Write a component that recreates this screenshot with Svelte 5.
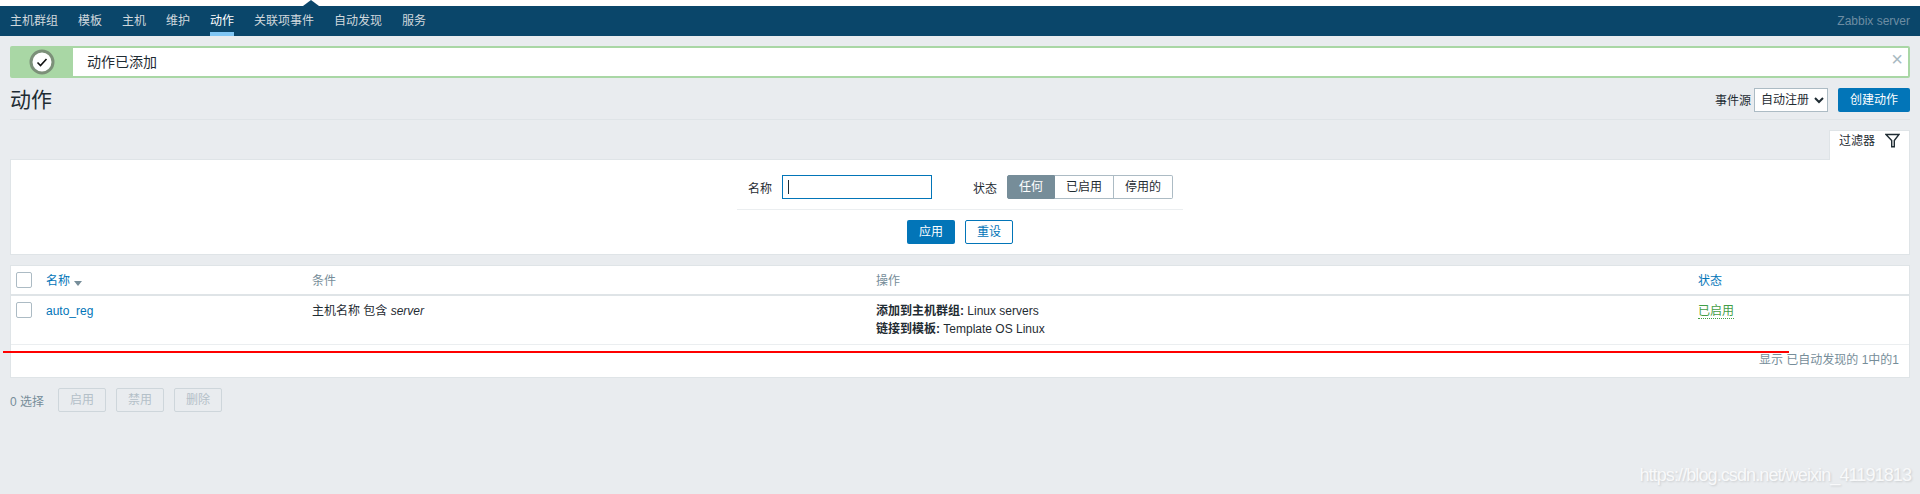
<script>
	const navItems = ['主机群组', '模板', '主机', '维护', '动作', '关联项事件', '自动发现', '服务'];
	const statuses = ['任何', '已启用', '停用的'];
	const bulk = ['启用', '禁用', '删除'];
</script>

<div class="page">
	<div class="topline"><span class="notch"></span></div>
	<nav class="nav">
		<ul>
			{#each navItems as item}
				<li class:active={item === '动作'}>{item}</li>
			{/each}
		</ul>
		<span class="server">Zabbix server</span>
	</nav>

	<main class="content">
		<div class="notice">
			<div class="notice-icon">
				<svg width="26" height="26" viewBox="0 0 26 26">
					<circle cx="13" cy="13" r="11" fill="#fff" stroke="#7c9079" stroke-width="3" />
					<path d="M8.5 13.5l3 3 6-6.5" fill="none" stroke="#111" stroke-width="1.6" />
				</svg>
			</div>
			<div class="notice-text">动作已添加</div>
			<span class="notice-close">×</span>
		</div>

		<header class="head">
			<h1>动作</h1>
			<div class="head-controls">
				<label class="source">
					事件源
					<select><option>自动注册</option></select>
				</label>
				<button class="btn primary create">创建动作</button>
			</div>
		</header>

		<div class="filter-tab-row">
			<div class="filter-tab">
				过滤器
				<svg width="15" height="15" viewBox="0 0 15 15">
					<path d="M1 1.5h13L9.3 7.5v6.2H6.7V7.5z" fill="none" stroke="#1f2c33" stroke-width="1.4" />
				</svg>
			</div>
		</div>
		<section class="filter">
			<div class="filter-fields">
				<span class="flabel">名称</span>
				<div class="name-input"><span class="caret"></span></div>
				<span class="flabel status-label">状态</span>
				<div class="segmented">
					{#each statuses as s, i}
						<span class:on={i === 0}>{s}</span>
					{/each}
				</div>
			</div>
			<div class="filter-actions">
				<button class="btn primary">应用</button>
				<button class="btn outline">重设</button>
			</div>
		</section>

		<section class="list">
			<div class="row head-row">
				<div class="c-check"><span class="check"></span></div>
				<div class="c-name link">名称 <span class="sort"></span></div>
				<div class="c-cond muted">条件</div>
				<div class="c-ops muted">操作</div>
				<div class="c-status link">状态</div>
			</div>
			<div class="row body-row">
				<div class="c-check"><span class="check"></span></div>
				<div class="c-name link">auto_reg</div>
				<div class="c-cond">主机名称 包含 <em>server</em></div>
				<div class="c-ops">
					<div><b>添加到主机群组:</b> Linux servers</div>
					<div><b>链接到模板:</b> Template OS Linux</div>
				</div>
				<div class="c-status"><span class="enabled">已启用</span></div>
			</div>
			<div class="list-foot">显示 已自动发现的 1中的1</div>
		</section>

		<div class="bulk">
			<span class="selected">0 选择</span>
			{#each bulk as b}
				<button class="btn ghost">{b}</button>
			{/each}
		</div>
	</main>

	<div class="redline"></div>
	<div class="watermark">https://blog.csdn.net/weixin_41191813</div>
</div>

<style>
	:global(body) {
		margin: 0;
		background: #ebeef0;
	}
	.page {
		position: relative;
		height: 494px;
		overflow: hidden;
		background: #e9ecef;
		font-family: 'Liberation Sans', 'Noto Sans CJK SC', sans-serif;
		font-size: 12px;
		color: #1f2c33;
	}
	.topline {
		position: relative;
		height: 6px;
		background: #fff;
	}
	.notch {
		position: absolute;
		left: 303px;
		top: 0;
		border-left: 8px solid transparent;
		border-right: 8px solid transparent;
		border-bottom: 6px solid #0a466a;
	}
	.nav {
		display: flex;
		justify-content: space-between;
		height: 30px;
		padding: 0 10px;
		background: #0a466a;
	}
	.nav ul {
		display: flex;
		gap: 20px;
		margin: 0;
		padding: 0;
		list-style: none;
	}
	.nav li {
		height: 30px;
		box-sizing: border-box;
		padding-top: 7px;
		line-height: 16px;
		color: #d0d8dd;
	}
	.nav li.active {
		color: #fff;
		border-bottom: 4px solid #80c6f4;
	}
	.server {
		padding-top: 7px;
		line-height: 16px;
		color: #6d8da3;
	}
	.content {
		padding: 10px 10px 0;
	}
	.notice {
		position: relative;
		display: flex;
		height: 32px;
		box-sizing: border-box;
		border: 2px solid #a9d7a5;
		border-radius: 2px;
		background: #fff;
	}
	.notice-icon {
		display: flex;
		align-items: center;
		justify-content: center;
		width: 60px;
		padding-right: 1px;
		background: #a9d7a5;
	}
	.notice-text {
		padding-left: 14px;
		font-size: 14px;
		line-height: 28px;
	}
	.notice-close {
		position: absolute;
		right: 5px;
		top: 2px;
		font-size: 20px;
		line-height: 18px;
		color: #a8b9c2;
	}
	.head {
		display: flex;
		justify-content: space-between;
		align-items: center;
		height: 41px;
		border-bottom: 1px solid #dfe4e7;
	}
	h1 {
		margin: 0;
		font-size: 21px;
		font-weight: 400;
		line-height: 28px;
		position: relative;
		top: 1px;
	}
	.head-controls {
		display: flex;
		align-items: center;
		gap: 10px;
		position: relative;
		top: 1px;
	}
	.source {
		display: flex;
		align-items: center;
		gap: 3px;
	}
	select {
		width: 74px;
		height: 24px;
		padding: 0 0 0 2px;
		border: 1px solid #acbbc4;
		border-radius: 0;
		background: #fff;
		color: #1f2c33;
		font: inherit;
	}
	.btn {
		height: 24px;
		padding: 0;
		border-radius: 2px;
		border: 1px solid transparent;
		font: inherit;
		line-height: 22px;
	}
	.primary {
		width: 48px;
		background: #0275b8;
		color: #fff;
	}
	.create {
		width: 72px;
	}
	.outline {
		width: 48px;
		background: #fff;
		border-color: #0275b8;
		color: #0275b8;
	}
	.ghost {
		width: 48px;
		background: #e9ecef;
		border-color: #ced6db;
		color: #b4c0c8;
	}
	.filter-tab-row {
		display: flex;
		justify-content: flex-end;
		margin-top: 10px;
	}
	.filter-tab {
		display: flex;
		gap: 10px;
		width: 81px;
		height: 30px;
		box-sizing: border-box;
		padding: 2px 0 0 9px;
		border: 1px solid #dfe4e7;
		border-bottom: 0;
		background: #fff;
		line-height: 16px;
		margin-bottom: -1px;
		position: relative;
	}
	.filter {
		height: 96px;
		box-sizing: border-box;
		border: 1px solid #dfe4e7;
		background: #fff;
	}
	.filter-fields {
		display: flex;
		align-items: center;
		justify-content: center;
		width: 446px;
		height: 50px;
		box-sizing: border-box;
		margin: 0 auto;
		padding: 15px 0 10px 1px;
		border-bottom: 1px solid #ebeef0;
	}
	.flabel {
		margin-right: 10px;
	}
	.status-label {
		margin-left: 41px;
	}
	.name-input {
		display: flex;
		align-items: center;
		width: 150px;
		height: 24px;
		box-sizing: border-box;
		padding-left: 5px;
		border: 1px solid #0275b8;
	}
	.caret {
		width: 1px;
		height: 14px;
		background: #1f2c33;
	}
	.segmented {
		display: flex;
		height: 24px;
	}
	.segmented span {
		box-sizing: border-box;
		padding: 0 11px;
		line-height: 22px;
		border: 1px solid #acbbc4;
		border-left-width: 0;
	}
	.segmented span:first-child {
		border-radius: 2px 0 0 2px;
		border-left-width: 1px;
	}
	.segmented span:last-child {
		border-radius: 0 2px 2px 0;
	}
	.segmented .on {
		background: #768d99;
		border-color: #768d99;
		color: #fff;
	}
	.filter-actions {
		display: flex;
		justify-content: center;
		gap: 10px;
		padding-top: 10px;
	}
	.list {
		margin-top: 10px;
		border: 1px solid #dfe4e7;
		background: #fff;
	}
	.row {
		display: grid;
		grid-template-columns: 35px 266px 564px 822px 1fr;
	}
	.head-row {
		height: 28px;
		box-sizing: content-box;
		align-items: center;
		border-bottom: 2px solid #dfe4e7;
	}
	.head-row .link,
	.head-row .muted {
		padding-bottom: 2px;
	}
	.body-row {
		height: 49px;
		padding-top: 6px;
		box-sizing: border-box;
		line-height: 18px;
		border-bottom: 1px solid #ebeef0;
	}
	.c-check {
		padding-left: 5px;
	}
	.check {
		display: block;
		width: 14px;
		height: 14px;
		border: 1px solid #acbbc4;
		border-radius: 2px;
	}
	.link {
		color: #0275b8;
	}
	.muted {
		color: #768d99;
	}
	.sort {
		display: inline-block;
		margin-left: 1px;
		border-left: 4px solid transparent;
		border-right: 4px solid transparent;
		border-top: 5px solid #768d99;
		vertical-align: -1px;
	}
	em {
		font-style: italic;
	}
	.enabled {
		color: #429e47;
		border-bottom: 1px dotted #429e47;
	}
	.list-foot {
		height: 32px;
		box-sizing: border-box;
		padding: 7px 10px 0;
		text-align: right;
		line-height: 16px;
		color: #768d99;
	}
	.bulk {
		display: flex;
		align-items: center;
		gap: 10px;
		margin-top: 10px;
	}
	.selected {
		width: 38px;
		color: #768d99;
	}
	.redline {
		position: absolute;
		left: 3px;
		top: 351px;
		width: 1786px;
		height: 2px;
		background: #f00;
	}
	.watermark {
		position: absolute;
		right: 9px;
		top: 463px;
		font-size: 18px;
		letter-spacing: -0.9px;
		line-height: 24px;
		color: #fff;
		opacity: 0.7;
		text-shadow: 1px 1px 2px rgba(0, 0, 0, 0.18);
	}
</style>
